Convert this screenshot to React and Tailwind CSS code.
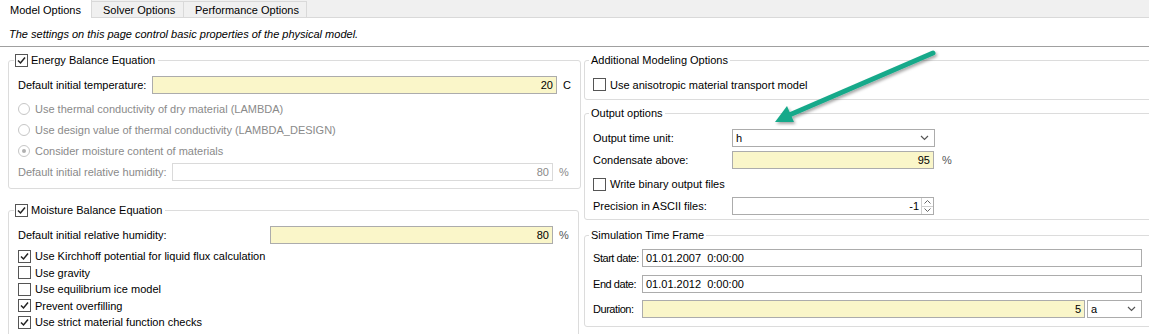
import React from 'react';

const Check = ({ checked }) => (
  <span className="w-[13px] h-[13px] border border-[#555] bg-white flex items-center justify-center shrink-0">
    {checked && (
      <svg width="9" height="9" viewBox="0 0 9 9">
        <path d="M1 4.5 L3.5 7 L8 1.5" fill="none" stroke="#222" strokeWidth="1.5" />
      </svg>
    )}
  </span>
);

const Radio = ({ checked }) => (
  <span className="w-[12px] h-[12px] rounded-full border border-[#c6c6c6] bg-white flex items-center justify-center shrink-0">
    {checked && <span className="w-[4px] h-[4px] rounded-full bg-[#b0b0b0]" />}
  </span>
);

const Field = ({ value, width, yellow, disabled }) => (
  <div
    className={`h-[18px] border flex items-center justify-end pr-[3px] shrink-0 ${
      yellow ? 'bg-[#faf6c9] border-[#acacac] text-black' : disabled ? 'bg-white border-[#dadada] text-[#8a8a8a]' : 'bg-white border-[#acacac] text-black'
    }`}
    style={{ width }}
  >
    {value}
  </div>
);

const Chevron = () => (
  <svg width="9" height="6" viewBox="0 0 9 6">
    <path d="M1 1 L4.5 4.5 L8 1" fill="none" stroke="#555" strokeWidth="1.2" />
  </svg>
);

const Label = ({ w, tight, children }) => (
  <span className={`shrink-0 whitespace-nowrap ${tight ? 'tracking-[-0.45px]' : ''}`} style={{ width: w }}>{children}</span>
);

const Group = ({ title, checked, children, className = '' }) => (
  <fieldset className={`border border-[#dcdcdc] rounded-[3px] ${className}`}>
    {checked !== undefined ? (
      <legend className="ml-[5px] px-[1px] h-[13px] flex items-center gap-[3px] leading-[13px]">
        <Check checked={checked} />
        <span className="pr-[2px]">{title}</span>
      </legend>
    ) : (
      <legend className="ml-[4px] px-[2px] h-[13px] leading-[13px]">{title}</legend>
    )}
    {children}
  </fieldset>
);

export default function App() {
  return (
    <div className="relative w-[1149px] h-[334px] overflow-hidden bg-white text-[11px] leading-[14px] text-black font-['Liberation_Sans',Arial,sans-serif]">
      {/* tab strip */}
      <div className="h-[18px] bg-[#f0f0f0] border-b border-[#d9d9d9] flex items-end">
        <div className="w-[92px] h-[18px] -mb-px bg-white border-r border-[#d9d9d9] pl-[10px] pt-[3px]">Model Options</div>
        <div className="w-[92px] h-[16px] border-r border-t border-[#d9d9d9] pl-[11px] pt-[1px]">Solver Options</div>
        <div className="w-[123px] h-[16px] border-r border-t border-[#d9d9d9] pl-[11px] pt-[1px]">Performance Options</div>
      </div>

      <div className="h-[28px] pl-[9px] pt-[9px] italic">The settings on this page control basic properties of the physical model.</div>
      <div className="border-t border-[#a0a0a0]" />

      <div className="flex gap-[6px] pl-[8px] pt-[7px]">
        {/* left column */}
        <div className="w-[570px] shrink-0 flex flex-col">
          <Group title="Energy Balance Equation" checked>
            <div className="px-[9px] pb-[7px]">
              <div className="flex items-center mt-[9px]">
                <Label w={134}>Default initial temperature:</Label>
                <Field value="20" width={405} yellow />
                <span className="ml-[6px]">C</span>
              </div>
              <div className="mt-[4px] text-[#8a8a8a]">
                {[
                  ['Use thermal conductivity of dry material (LAMBDA)', false],
                  ['Use design value of thermal conductivity (LAMBDA_DESIGN)', false],
                  ['Consider moisture content of materials', true],
                ].map(([t, c]) => (
                  <div key={t} className="h-[21px] flex items-center gap-[5px]">
                    <Radio checked={c} />
                    <span>{t}</span>
                  </div>
                ))}
              </div>
              <div className="flex items-center mt-[2px] text-[#8a8a8a]">
                <Label w={154}>Default initial relative humidity:</Label>
                <Field value="80" width={381} disabled />
                <span className="ml-[6px]">%</span>
              </div>
            </div>
          </Group>

          <Group title="Moisture Balance Equation" checked className="mt-[15px] h-[150px]">
            <div className="px-[9px]">
              <div className="flex items-center mt-[9px]">
                <Label w={252}>Default initial relative humidity:</Label>
                <Field value="80" width={283} yellow />
                <span className="ml-[6px] text-[#555]">%</span>
              </div>
              <div className="mt-[4px]">
                {[
                  ['Use Kirchhoff potential for liquid flux calculation', true],
                  ['Use gravity', false],
                  ['Use equilibrium ice model', false],
                  ['Prevent overfilling', true],
                  ['Use strict material function checks', true],
                ].map(([t, c]) => (
                  <div key={t} className="h-[16.5px] flex items-center gap-[4px]">
                    <Check checked={c} />
                    <span>{t}</span>
                  </div>
                ))}
              </div>
            </div>
          </Group>
        </div>

        {/* right column */}
        <div className="w-[570px] shrink-0 flex flex-col">
          <Group title="Additional Modeling Options">
            <div className="px-[8px] pb-[8px]">
              <div className="flex items-center gap-[4px] mt-[11px] h-[13px]">
                <Check checked={false} />
                <span>Use anisotropic material transport model</span>
              </div>
            </div>
          </Group>

          <Group title="Output options" className="mt-[7px]">
            <div className="px-[8px] pb-[4px]">
              <div className="flex items-center mt-[9px]">
                <Label w={139}>Output time unit:</Label>
                <div className="w-[203px] h-[18px] border border-[#acacac] bg-white flex items-center justify-between pl-[3px] pr-[5px]">
                  <span>h</span>
                  <Chevron />
                </div>
              </div>
              <div className="flex items-center mt-[4px]">
                <Label w={139}>Condensate above:</Label>
                <Field value="95" width={202} yellow />
                <span className="ml-[8px] text-[#555]">%</span>
              </div>
              <div className="flex items-center gap-[4px] mt-[6px] h-[18px]">
                <Check checked={false} />
                <span>Write binary output files</span>
              </div>
              <div className="flex items-center mt-[4px]">
                <Label w={139}>Precision in ASCII files:</Label>
                <div className="w-[202px] h-[18px] border border-[#acacac] bg-white flex items-center justify-end">
                  <span className="pr-[2px]">-1</span>
                  <div className="w-[12px] h-full flex flex-col border-l border-[#d0d0d0]">
                    <div className="flex-1 flex items-center justify-center border-b border-[#d0d0d0]">
                      <svg width="7" height="4" viewBox="0 0 7 4"><path d="M0.5 3.5 L3.5 0.5 L6.5 3.5" fill="none" stroke="#666" strokeWidth="1" /></svg>
                    </div>
                    <div className="flex-1 flex items-center justify-center">
                      <svg width="7" height="4" viewBox="0 0 7 4"><path d="M0.5 0.5 L3.5 3.5 L6.5 0.5" fill="none" stroke="#666" strokeWidth="1" /></svg>
                    </div>
                  </div>
                </div>
              </div>
            </div>
          </Group>

          <Group title="Simulation Time Frame" className="mt-[9px]">
            <div className="px-[8px] pb-[8px]">
              <div className="flex items-center mt-[7px]">
                <Label w={49} tight>Start date:</Label>
                <div className="w-[500px] h-[18px] border border-[#acacac] bg-white flex items-center pl-[3px]">01.01.2007&nbsp;&nbsp;0:00:00</div>
              </div>
              <div className="flex items-center mt-[8px]">
                <Label w={49} tight>End date:</Label>
                <div className="w-[500px] h-[18px] border border-[#acacac] bg-white flex items-center pl-[3px]">01.01.2012&nbsp;&nbsp;0:00:00</div>
              </div>
              <div className="flex items-center mt-[7px]">
                <Label w={49} tight>Duration:</Label>
                <Field value="5" width={443} yellow />
                <div className="ml-[2px] w-[55px] h-[18px] border border-[#acacac] bg-white flex items-center justify-between pl-[3px] pr-[5px]">
                  <span>a</span>
                  <Chevron />
                </div>
              </div>
            </div>
          </Group>
        </div>
      </div>

      {/* annotation arrow */}
      <svg className="absolute inset-0 pointer-events-none" width="1149" height="334">
        <defs>
          <filter id="sh" x="-10%" y="-10%" width="130%" height="140%">
            <feDropShadow dx="1.5" dy="2" stdDeviation="1.5" floodColor="#000" floodOpacity="0.35" />
          </filter>
        </defs>
        <g filter="url(#sh)">
          <line x1="933" y1="53" x2="787" y2="116" stroke="#19a98a" strokeWidth="5" strokeLinecap="round" />
          <polygon points="775,122 794,122 787,106" fill="#19a98a" />
        </g>
      </svg>
    </div>
  );
}
